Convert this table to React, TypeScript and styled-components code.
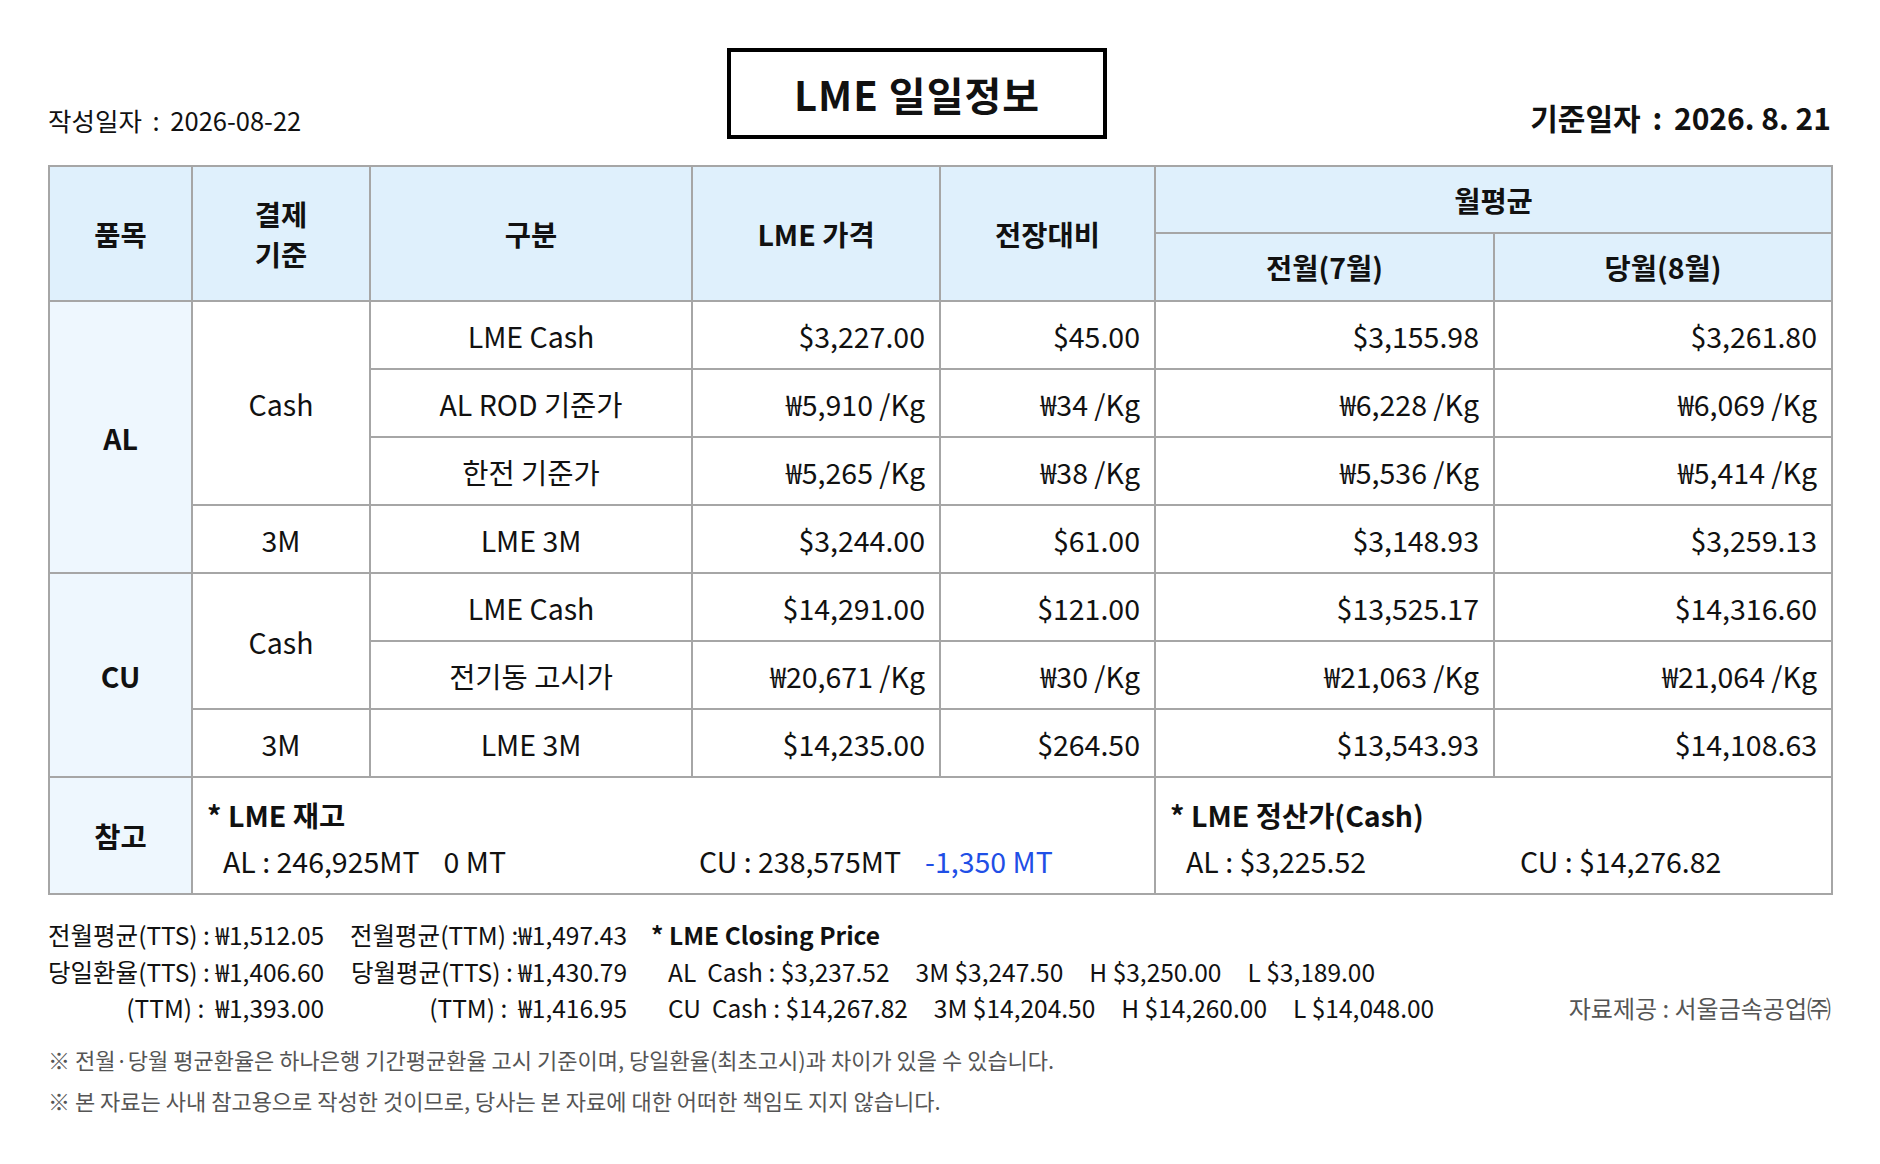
import styled, { createGlobalStyle } from "styled-components";

const GlobalStyle = createGlobalStyle`
  html, body {
    margin: 0;
    padding: 0;
    background: #ffffff;
  }
  body {
    font-family: "Noto Sans CJK KR", "Noto Sans", sans-serif;
    color: #111111;
  }
`;

const Page = styled.div`
  width: 1783px;
  padding: 48px 49px 40px 48px;
`;

const TopBar = styled.div`
  display: grid;
  grid-template-columns: 679px 380px 1fr;
  align-items: end;
  margin-bottom: 26px;
`;

const WrittenDate = styled.div`
  font-size: 25.5px;
  line-height: 32px;
  padding-bottom: 3px;
`;

const Colon = styled.span`
  margin: 0 5px;
  white-space: pre;
`;

const TitleBox = styled.div`
  box-sizing: border-box;
  height: 91px;
  border: 4px solid #000;
  display: flex;
  align-items: center;
  justify-content: center;
  font-size: 40px;
  font-weight: 700;
  letter-spacing: 1px;
`;

const BaseDate = styled.div`
  text-align: right;
  font-size: 30px;
  font-weight: 700;
  line-height: 36px;
  padding-bottom: 4px;
`;

const Table = styled.table`
  width: 1783px;
  table-layout: fixed;
  border-collapse: collapse;
  font-size: 28.5px;
`;

const Th = styled.th<{ $h?: number }>`
  border: 2px solid #a6a6a6;
  background: #dff0fc;
  font-weight: 700;
  height: ${(p) => p.$h ?? 66}px;
  padding: 0;
  line-height: 40px;
`;

const Td = styled.td<{ $align?: "left" | "center" | "right"; $item?: boolean }>`
  border: 2px solid #a6a6a6;
  height: 66px;
  padding: 0 14px;
  text-align: ${(p) => p.$align ?? "center"};
  background: ${(p) => (p.$item ? "#eef7fe" : "#ffffff")};
  font-weight: ${(p) => (p.$item ? 700 : 400)};
  white-space: nowrap;
`;

const NoteCell = styled.td`
  border: 2px solid #a6a6a6;
  vertical-align: top;
  padding: 19px 0 0 14px;
  height: 96px;
`;

const NoteTitle = styled.div`
  font-weight: 700;
  line-height: 36px;
`;

const NoteLine = styled.div`
  display: flex;
  margin-top: 10px;
  padding-left: 16px;
  line-height: 36px;
`;

const NoteItem = styled.div<{ $w?: number }>`
  width: ${(p) => (p.$w ? `${p.$w}px` : "auto")};
  white-space: pre;
`;

const Change = styled.span<{ $minus?: boolean }>`
  margin-left: 24px;
  color: ${(p) => (p.$minus ? "#1f4fe6" : "inherit")};
`;

const Footer = styled.div`
  display: flex;
  align-items: flex-end;
  margin-top: 22px;
  font-size: 24.5px;
  line-height: 36.5px;
`;

const RateGrid = styled.div<{ $w: number }>`
  display: grid;
  grid-template-columns: auto auto;
  justify-content: start;
  width: ${(p) => p.$w}px;
  white-space: pre;
`;

const RateLabel = styled.span`
  text-align: right;
`;

const Closing = styled.div`
  white-space: pre;
`;

const ClosingTitle = styled.div`
  font-weight: 700;
`;

const ClosingLine = styled.div`
  display: flex;
  gap: 26px;
  padding-left: 17px;
`;

const Source = styled.div`
  margin-left: auto;
  color: #555555;
  font-size: 24px;
`;

const Notes = styled.div`
  margin-top: 12px;
  color: #555555;
  font-size: 22px;
  line-height: 41px;
`;

type Row = {
  item?: { name: string; span: number };
  basis?: { name: string; span: number };
  kind: string;
  price: string;
  diff: string;
  prev: string;
  cur: string;
};

const rows: Row[] = [
  { item: { name: "AL", span: 4 }, basis: { name: "Cash", span: 3 }, kind: "LME Cash", price: "$3,227.00", diff: "$45.00", prev: "$3,155.98", cur: "$3,261.80" },
  { kind: "AL ROD 기준가", price: "₩5,910 /Kg", diff: "₩34 /Kg", prev: "₩6,228 /Kg", cur: "₩6,069 /Kg" },
  { kind: "한전 기준가", price: "₩5,265 /Kg", diff: "₩38 /Kg", prev: "₩5,536 /Kg", cur: "₩5,414 /Kg" },
  { basis: { name: "3M", span: 1 }, kind: "LME 3M", price: "$3,244.00", diff: "$61.00", prev: "$3,148.93", cur: "$3,259.13" },
  { item: { name: "CU", span: 3 }, basis: { name: "Cash", span: 2 }, kind: "LME Cash", price: "$14,291.00", diff: "$121.00", prev: "$13,525.17", cur: "$14,316.60" },
  { kind: "전기동 고시가", price: "₩20,671 /Kg", diff: "₩30 /Kg", prev: "₩21,063 /Kg", cur: "₩21,064 /Kg" },
  { basis: { name: "3M", span: 1 }, kind: "LME 3M", price: "$14,235.00", diff: "$264.50", prev: "$13,543.93", cur: "$14,108.63" },
];

const cols = [143, 178, 322, 248, 215, 339, 338];

export default function App() {
  return (
    <>
      <GlobalStyle />
      <Page>
        <TopBar>
          <WrittenDate>
            작성일자<Colon>{" : "}</Colon>2026-08-22
          </WrittenDate>
          <TitleBox>LME 일일정보</TitleBox>
          <BaseDate>
            기준일자<Colon>{" : "}</Colon>2026. 8. 21
          </BaseDate>
        </TopBar>

        <Table>
          <colgroup>
            {cols.map((w, i) => (
              <col key={i} style={{ width: w }} />
            ))}
          </colgroup>
          <thead>
            <tr>
              <Th rowSpan={2}>품목</Th>
              <Th rowSpan={2}>
                결제
                <br />
                기준
              </Th>
              <Th rowSpan={2}>구분</Th>
              <Th rowSpan={2}>LME 가격</Th>
              <Th rowSpan={2}>전장대비</Th>
              <Th colSpan={2} $h={65}>
                월평균
              </Th>
            </tr>
            <tr>
              <Th $h={66}>전월(7월)</Th>
              <Th $h={66}>당월(8월)</Th>
            </tr>
          </thead>
          <tbody>
            {rows.map((r, i) => (
              <tr key={i}>
                {r.item && (
                  <Td rowSpan={r.item.span} $item>
                    {r.item.name}
                  </Td>
                )}
                {r.basis && <Td rowSpan={r.basis.span}>{r.basis.name}</Td>}
                <Td>{r.kind}</Td>
                <Td $align="right">{r.price}</Td>
                <Td $align="right">{r.diff}</Td>
                <Td $align="right">{r.prev}</Td>
                <Td $align="right">{r.cur}</Td>
              </tr>
            ))}
            <tr>
              <Td $item>참고</Td>
              <NoteCell colSpan={4}>
                <NoteTitle>* LME 재고</NoteTitle>
                <NoteLine>
                  <NoteItem $w={476}>
                    AL : 246,925MT<Change>0 MT</Change>
                  </NoteItem>
                  <NoteItem>
                    CU : 238,575MT<Change $minus>-1,350 MT</Change>
                  </NoteItem>
                </NoteLine>
              </NoteCell>
              <NoteCell colSpan={2}>
                <NoteTitle>* LME 정산가(Cash)</NoteTitle>
                <NoteLine>
                  <NoteItem $w={334}>AL : $3,225.52</NoteItem>
                  <NoteItem>CU : $14,276.82</NoteItem>
                </NoteLine>
              </NoteCell>
            </tr>
          </tbody>
        </Table>

        <Footer>
          <RateGrid $w={302}>
            <RateLabel>전월평균(TTS) : </RateLabel>
            <span>₩1,512.05</span>
            <RateLabel>당일환율(TTS) : </RateLabel>
            <span>₩1,406.60</span>
            <RateLabel>(TTM) :  </RateLabel>
            <span>₩1,393.00</span>
          </RateGrid>
          <RateGrid $w={301}>
            <RateLabel>전월평균(TTM) :</RateLabel>
            <span>₩1,497.43</span>
            <RateLabel>당월평균(TTS) : </RateLabel>
            <span>₩1,430.79</span>
            <RateLabel>(TTM) :  </RateLabel>
            <span>₩1,416.95</span>
          </RateGrid>
          <Closing>
            <ClosingTitle>* LME Closing Price</ClosingTitle>
            <ClosingLine>
              <span>AL  Cash : $3,237.52</span>
              <span>3M $3,247.50</span>
              <span>H $3,250.00</span>
              <span>L $3,189.00</span>
            </ClosingLine>
            <ClosingLine>
              <span>CU  Cash : $14,267.82</span>
              <span>3M $14,204.50</span>
              <span>H $14,260.00</span>
              <span>L $14,048.00</span>
            </ClosingLine>
          </Closing>
          <Source>자료제공 : 서울금속공업㈜</Source>
        </Footer>

        <Notes>
          <div>※ 전월·당월 평균환율은 하나은행 기간평균환율 고시 기준이며, 당일환율(최초고시)과 차이가 있을 수 있습니다.</div>
          <div>※ 본 자료는 사내 참고용으로 작성한 것이므로, 당사는 본 자료에 대한 어떠한 책임도 지지 않습니다.</div>
        </Notes>
      </Page>
    </>
  );
}
